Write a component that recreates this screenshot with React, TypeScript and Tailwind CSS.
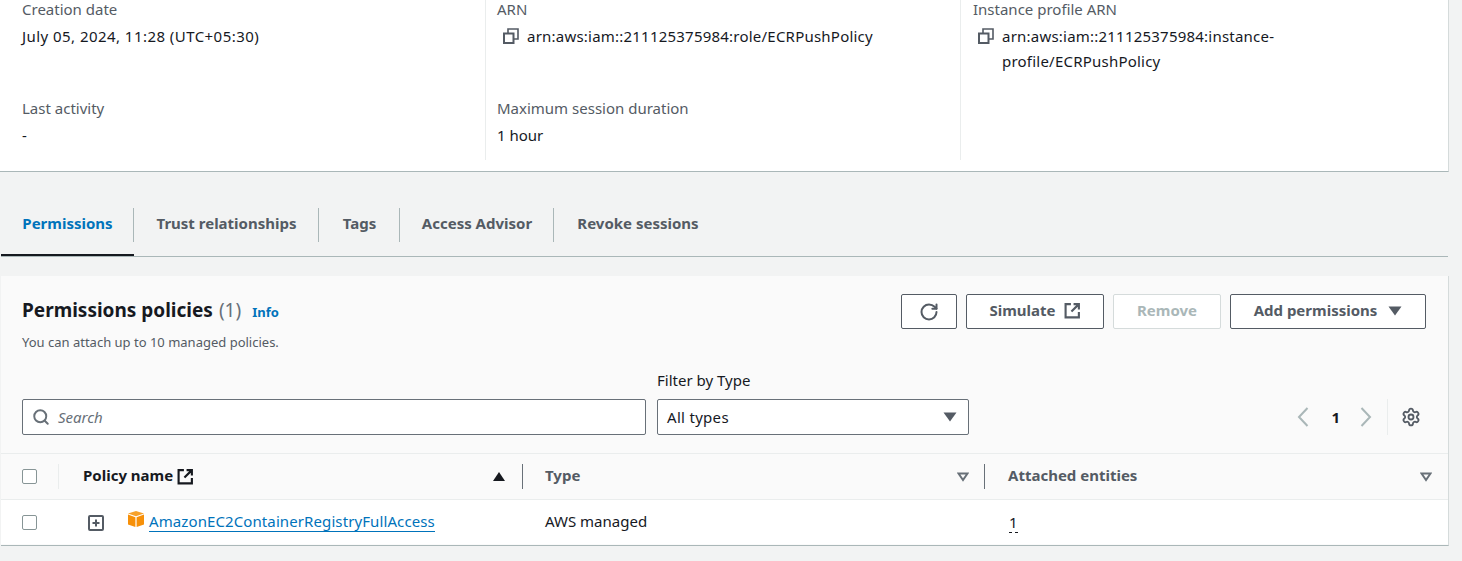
import { RotateCw, Settings, Search } from 'lucide-react';

const font = { fontFamily: '"Noto Sans", sans-serif' };

function CopyIcon() {
  return (
    <svg width="16" height="16" viewBox="0 0 16 16" fill="none" stroke="#545b64" strokeWidth="2" className="shrink-0">
      <path d="M1 5.5h9.5V15H1z" />
      <path d="M5 5V1h10v10h-4" strokeWidth="1.6" />
    </svg>
  );
}

function LinkIcon({ color, size }: { color: string; size: number }) {
  return (
    <svg width={size} height={size} viewBox="0 0 16 16" fill="none" stroke={color} strokeWidth="2" className="shrink-0">
      <path d="M6.5 2H1.5v12.5H14V9.5" />
      <path d="M9 2h5v5M14 2L7 9" />
    </svg>
  );
}

function Field({ label, children, className = '' }: { label: string; children: React.ReactNode; className?: string }) {
  return (
    <div className={className}>
      <div className="-mt-[1px] text-[15px] leading-5 text-[#545b64]">{label}</div>
      <div className="mt-[7px] text-[15px] leading-5 text-[#16191f]">{children}</div>
    </div>
  );
}

function Caret({ className = '' }: { className?: string }) {
  return (
    <svg width="14" height="10" viewBox="0 0 14 10" className={className} fill="#545b64">
      <path d="M0.5 0.5h13L7 9.5z" />
    </svg>
  );
}

function SortCaret() {
  return (
    <svg width="12" height="10" viewBox="0 0 12 10" fill="none" stroke="#687078" strokeWidth="2">
      <path d="M1.5 1.5h9L6 8z" />
    </svg>
  );
}

function Checkbox() {
  return <div className="h-[15px] w-[15px] rounded-[2px] border border-[#879596] bg-white" />;
}

function Tab({ label, active = false, last = false, width }: { label: string; active?: boolean; last?: boolean; width: string }) {
  return (
    <div className={`relative flex h-[66px] items-center justify-center border-b-2 pt-[3px] ${width} ${active ? 'border-[#16191f]' : 'border-transparent'}`}>
      <span className={`text-[15px] font-bold ${active ? 'text-[#0073bb]' : 'text-[#545b64]'}`}>{label}</span>
      {!last && <div className="absolute right-0 top-[18px] h-[34px] w-px bg-[#aab7b8]" />}
    </div>
  );
}

function Button({ children, className = '' }: { children: React.ReactNode; className?: string }) {
  return (
    <div className={`flex h-[35px] items-center justify-center gap-2 rounded-[2px] border border-[#545b64] bg-white text-[15px] font-bold text-[#545b64] ${className}`}>
      {children}
    </div>
  );
}

export default function App() {
  return (
    <div style={font} className="h-[561px] w-[1462px] overflow-hidden bg-[#f2f3f3]">
      {/* Role summary */}
      <div className="h-[172px] w-[1449px] border-b border-r border-[#aab7b8] border-r-[#d5dbdb] bg-white">
        <div className="grid h-[160px] grid-cols-[486px_475px_1fr]">
          <div className="flex flex-col gap-[53px] border-r border-[#eaeded] pl-[22px]">
            <Field label="Creation date">
              <span className="tracking-[0.45px]">July 05, 2024, 11:28 (UTC+05:30)</span>
            </Field>
            <Field label="Last activity">-</Field>
          </div>
          <div className="flex flex-col gap-[53px] border-r border-[#eaeded] pl-[11px]">
            <Field label="ARN">
              <div className="flex items-center gap-[8px] pl-[6px]">
                <CopyIcon />
                <span className="tracking-[0.22px]">arn:aws:iam::211125375984:role/ECRPushPolicy</span>
              </div>
            </Field>
            <Field label="Maximum session duration">1 hour</Field>
          </div>
          <div className="pl-[12px]">
            <Field label="Instance profile ARN">
              <div className="flex items-start gap-[8px] pl-[5px]">
                <div className="pt-[2px]">
                  <CopyIcon />
                </div>
                <span className="w-[300px] leading-[25px] -mt-[2px] tracking-[0.22px]">arn:aws:iam::211125375984:instance-profile/ECRPushPolicy</span>
              </div>
            </Field>
          </div>
        </div>
      </div>

      {/* Tabs */}
      <div className="mt-[18px] ml-px flex h-[67px] w-[1447px] border-b border-[#aab7b8]">
        <Tab label="Permissions" active width="w-[133px]" />
        <Tab label="Trust relationships" width="w-[185px]" />
        <Tab label="Tags" width="w-[81px]" />
        <Tab label="Access Advisor" width="w-[154px]" />
        <Tab label="Revoke sessions" last width="w-[168px]" />
      </div>

      {/* Permissions panel */}
      <div className="mt-[19px] ml-px h-[270px] w-[1448px] border-b border-r border-[#aab7b8] border-r-[#d5dbdb] bg-[#fafafa]">
        <div className="h-[178px] border-b border-[#eaeded] pl-[21px] pr-[22px]">
          <div className="flex justify-between pt-[18px]">
            <div>
              <div className="flex items-baseline">
                <span className="text-[19px] font-bold leading-[32px] text-[#16191f]">Permissions policies</span>
                <span className="ml-[6px] text-[19px] text-[#687078]">(1)</span>
                <span className="ml-[11px] text-[13px] font-bold text-[#0073bb]">Info</span>
              </div>
              <div className="mt-[6px] text-[13px] leading-5 text-[#545b64]">You can attach up to 10 managed policies.</div>
            </div>
            <div className="flex gap-[9px]">
              <Button className="w-[56px]">
                <RotateCw size={20} strokeWidth={2.4} color="#545b64" />
              </Button>
              <Button className="w-[138px] pb-[2px]">
                Simulate
                <LinkIcon color="#545b64" size={17} />
              </Button>
              <div className="flex h-[35px] w-[108px] items-center justify-center rounded-[2px] border border-[#d5dbdb] bg-white pb-[2px] text-[15px] font-bold text-[#aab7b8]">
                Remove
              </div>
              <Button className="w-[196px] gap-[11px] pb-[2px]">
                Add permissions
                <Caret />
              </Button>
            </div>
          </div>
          <div className="mt-[18px] flex items-end">
            <div className="flex h-[36px] w-[624px] items-center gap-[8px] rounded-[2px] border border-[#687078] bg-white pl-[9px]">
              <Search size={18} strokeWidth={2.6} color="#687078" />
              <span className="text-[15px] italic text-[#687078]">Search</span>
            </div>
            <div className="ml-[11px] w-[312px]">
              <div className="mb-[9px] text-[15px] leading-5 text-[#16191f]">Filter by Type</div>
              <div className="flex h-[36px] items-center justify-between rounded-[2px] border border-[#687078] bg-white pl-[9px] pr-[11px]">
                <span className="text-[15px] tracking-[0.3px] text-[#16191f]">All types</span>
                <Caret />
              </div>
            </div>
            <div className="ml-auto flex h-[36px] items-center">
              <svg width="12" height="20" viewBox="0 0 12 20" fill="none" stroke="#aab7b8" strokeWidth="2">
                <path d="M10.5 1L2 10l8.5 9" />
              </svg>
              <span className="ml-[22px] mr-[20px] text-[15px] font-bold text-[#16191f]">1</span>
              <svg width="12" height="20" viewBox="0 0 12 20" fill="none" stroke="#aab7b8" strokeWidth="2">
                <path d="M1.5 1L10 10l-8.5 9" />
              </svg>
              <div className="ml-[15px] h-[36px] w-px bg-[#eaeded]" />
              <Settings size={20} strokeWidth={2.2} color="#545b64" className="ml-[13px] mr-[5px]" />
            </div>
          </div>
        </div>

        <div className="grid h-[46px] grid-cols-[58px_464px_462px_1fr] items-center border-b border-[#eaeded]">
          <div className="flex h-[25px] items-center border-r border-[#eaeded] pl-[21px]">
            <Checkbox />
          </div>
          <div className="flex h-[25px] items-center justify-between border-r border-[#687078] pl-[24px] pr-[17px]">
            <div className="flex items-center gap-[4px]">
              <span className="pb-[2px] text-[15px] font-bold text-[#16191f]">Policy name</span>
              <LinkIcon color="#16191f" size={17} />
            </div>
            <svg width="12" height="9" viewBox="0 0 12 9" fill="#16191f">
              <path d="M6 0l6 9H0z" />
            </svg>
          </div>
          <div className="flex h-[25px] items-center justify-between border-r border-[#687078] pl-[22px] pr-[15px]">
            <span className="pb-[2px] text-[15px] font-bold text-[#545b64]">Type</span>
            <SortCaret />
          </div>
          <div className="flex h-[25px] items-center justify-between pl-[23px] pr-[16px]">
            <span className="pb-[2px] text-[15px] font-bold text-[#545b64]">Attached entities</span>
            <SortCaret />
          </div>
        </div>

        <div className="grid h-[44px] grid-cols-[58px_464px_462px_1fr] items-center bg-white">
          <div className="pl-[21px]">
            <Checkbox />
          </div>
          <div className="flex items-center pl-[29px]">
            <svg width="16" height="16" viewBox="0 0 16 16" className="mt-[2px]">
              <rect x="1" y="1" width="14" height="14" rx="1" fill="white" stroke="#545b64" strokeWidth="2" />
              <path d="M8 4.5v7M4.5 8h7" stroke="#545b64" strokeWidth="2" />
            </svg>
            <svg width="18" height="18" viewBox="0 0 18 18" className="ml-[23px] -mt-[6px]">
              <path d="M9 1l8 2.6-8 2.7-8-2.7z" fill="#f7a12a" />
              <path d="M1 4.6l7.4 2.6V17L1 14.5z" fill="#f79009" />
              <path d="M17 4.6L9.6 7.2V17l7.4-2.5z" fill="#f79009" />
            </svg>
            <span className="ml-[4px] -mt-[1px] border-b border-[#0073bb] text-[15px] leading-[19px] tracking-[0.1px] text-[#0073bb]">AmazonEC2ContainerRegistryFullAccess</span>
          </div>
          <div className="pb-[2px] pl-[22px] text-[15px] text-[#16191f]">AWS managed</div>
          <div className="pl-[24px]">
            <span className="border-b border-dashed border-[#16191f] text-[15px] leading-[19px] text-[#16191f]">1</span>
          </div>
        </div>
      </div>
    </div>
  );
}
